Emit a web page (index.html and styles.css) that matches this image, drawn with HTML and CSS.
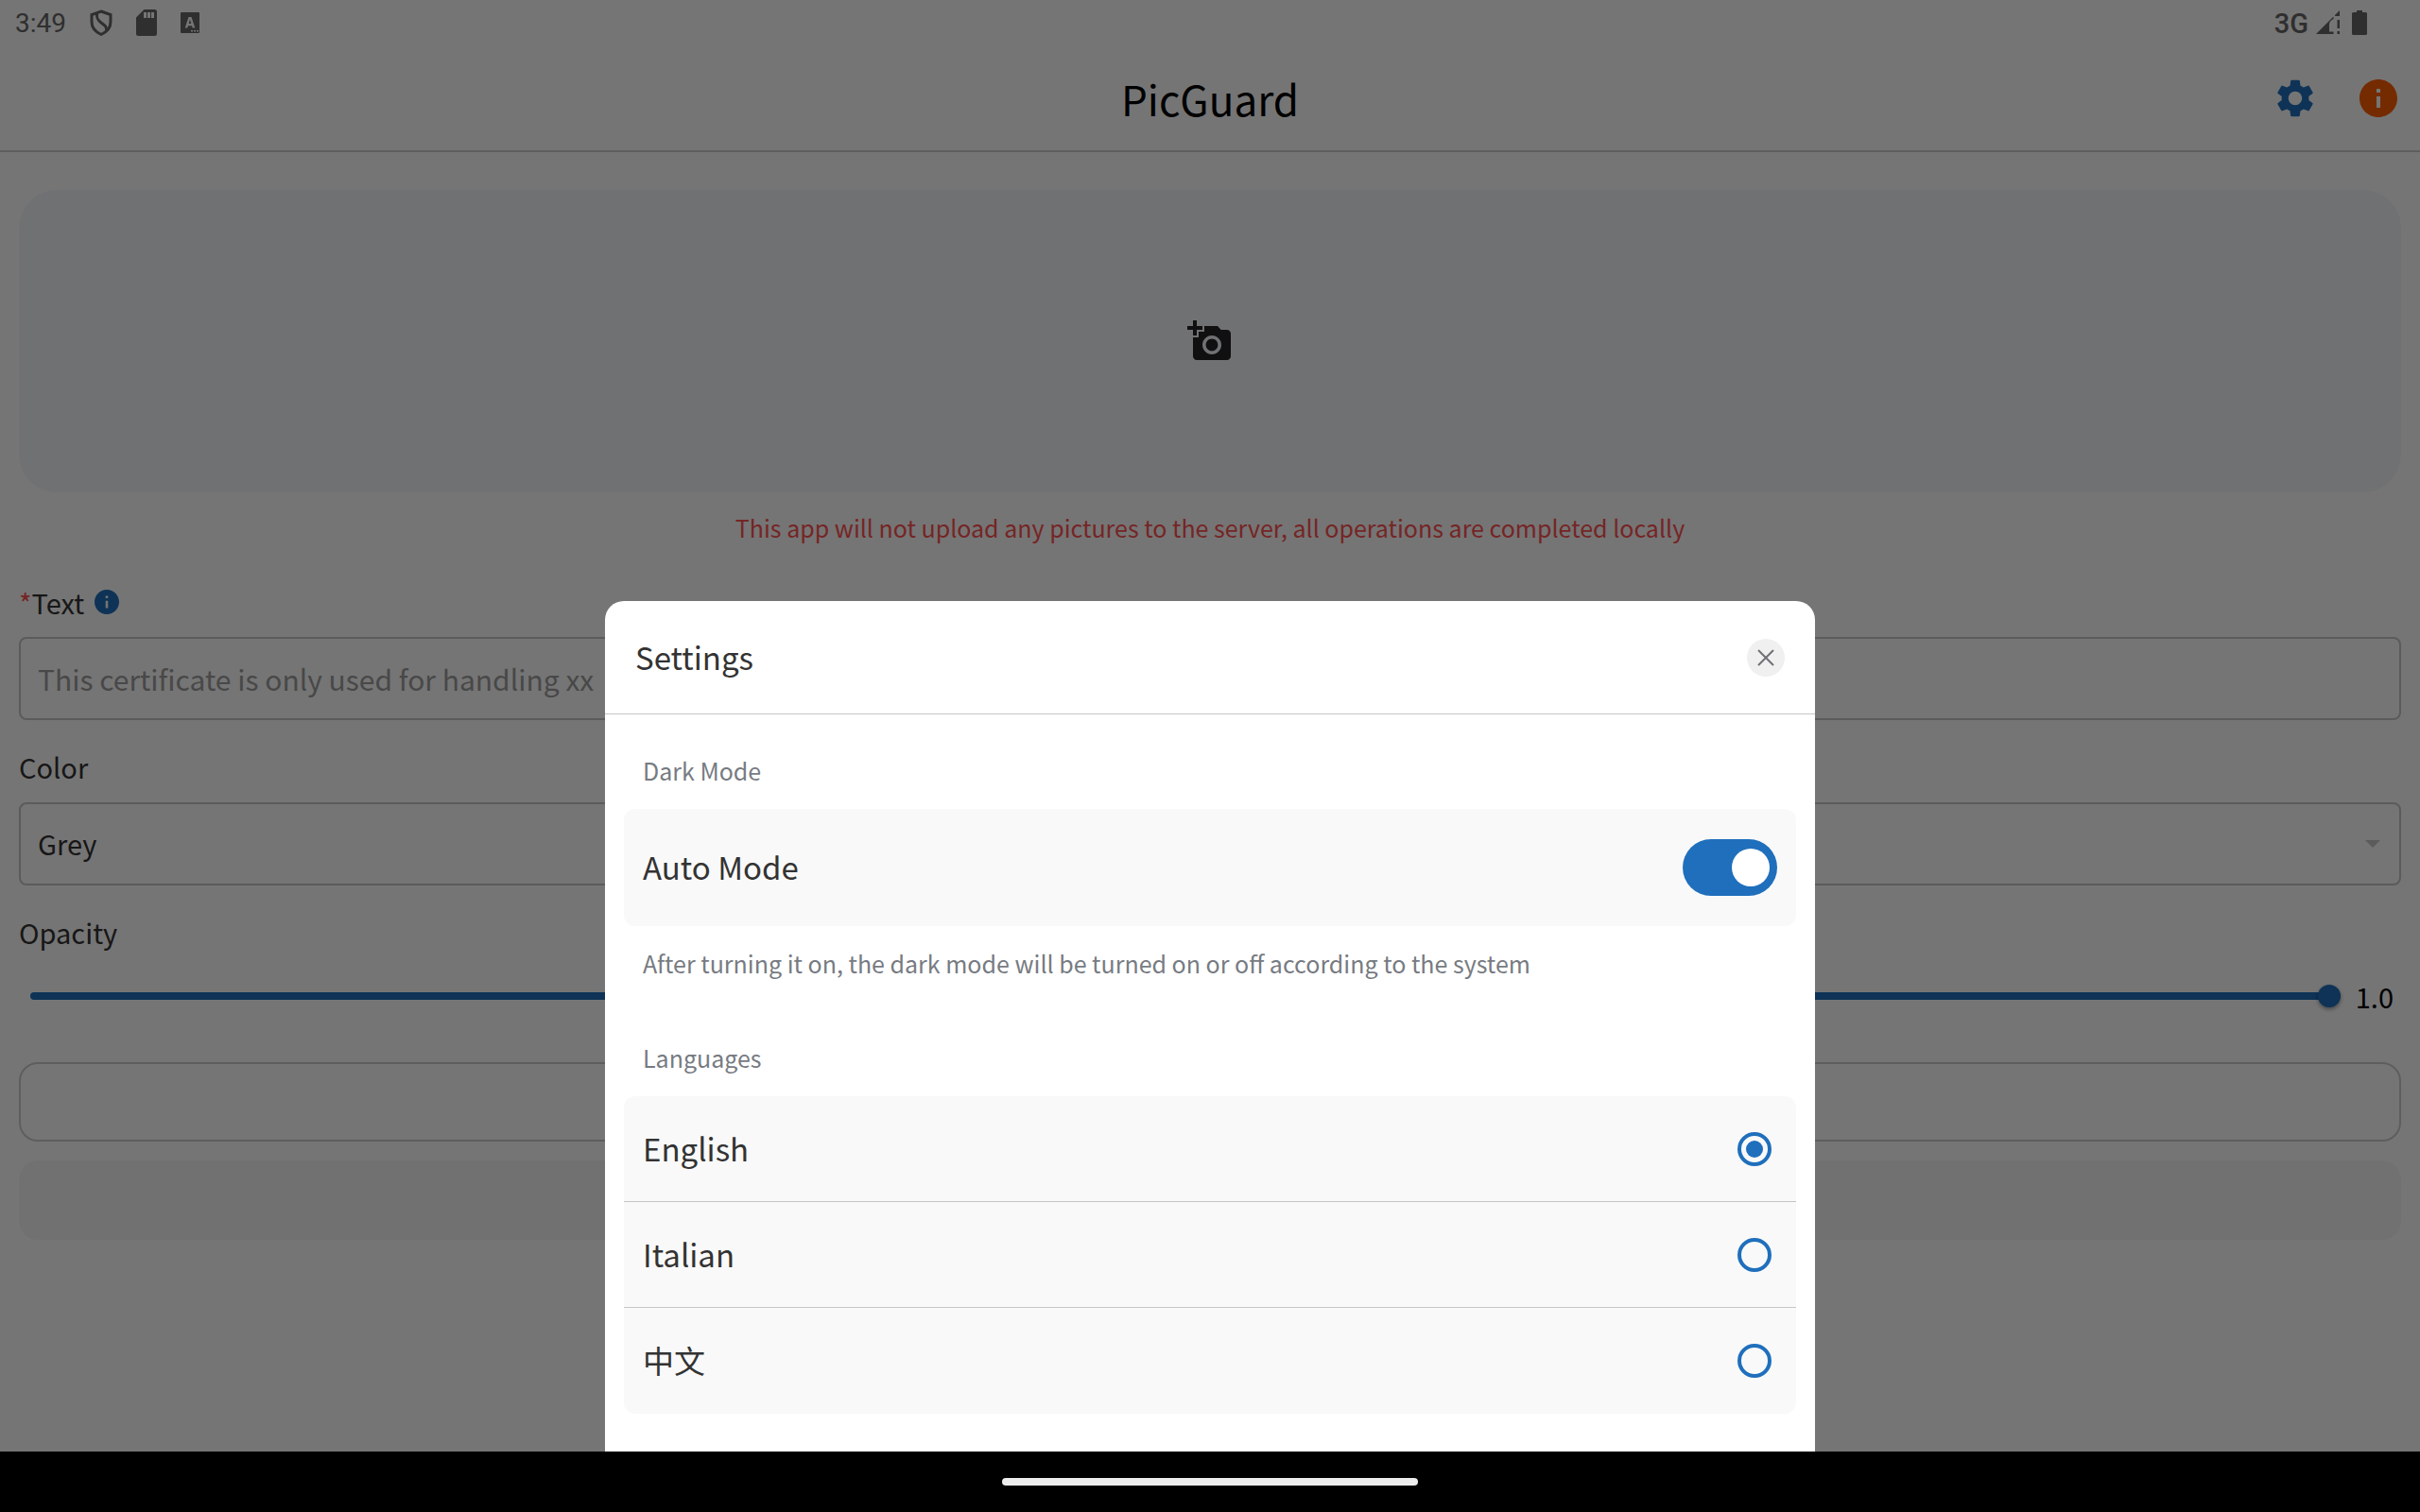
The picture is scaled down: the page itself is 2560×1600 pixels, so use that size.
FILE: index.html
```html
<!DOCTYPE html>
<html lang="en">
<head>
<meta charset="utf-8">
<meta name="viewport" content="width=device-width, initial-scale=1">
<title>PicGuard</title>
<link rel="stylesheet" href="styles.css">
</head>
<body>
<div class="screen">
  <div class="status">
    <div class="status-group status-left">
      <span class="clock">3:49</span>
      <svg class="shield" viewBox="0 0 24 28" aria-hidden="true"><path d="M12 2 22 5.500V13c0 6-3.500 10.500-10 13.500C5.500 23.500 2 19 2 13V5.500Z"/><path d="M7.500 4.500c-.5 5 1 7 4.500 9.500s6 4 5.500 8"/></svg>
      <svg class="sd" viewBox="0 0 22 28" aria-hidden="true"><path fill-rule="evenodd" d="M8.500 0H19.500Q22 0 22 2.500V25.500Q22 28 19.500 28H2.500Q0 28 0 25.500V8.500ZM8 3V9H11V3ZM12 3V9H15V3ZM16 3V9H19V3Z"/></svg>
      <svg class="abox" viewBox="0 0 20 22" aria-hidden="true"><path fill-rule="evenodd" d="M1 0H19Q20 0 20 1V21Q20 22 19 22H1Q0 22 0 21V1Q0 0 1 0ZM8.500 5 4.700 16.500H7.300L8 14.200H12L12.700 16.500H15.300L11.500 5ZM10 7.800 11.300 12H8.700ZM11 19V20.500H13V19ZM14 19V20.500H16V19ZM17 19V20.500H19V19Z"/></svg>
    </div>
    <div class="status-group status-right">
      <span class="net">3G</span>
      <svg class="signal" viewBox="0 0 26 26" aria-hidden="true"><path d="M0 25 18.500 6.500V9Q14 11 14 15V22.500H18.500V25ZM20 5 25 0V6H20ZM22.500 10H25V19H22.500ZM22.500 22H25V25H22.500Z"/></svg>
      <svg class="battery" viewBox="0 0 16 26" aria-hidden="true"><path d="M5 0H11V2H14.500Q16 2 16 3.500V24.500Q16 26 14.500 26H1.500Q0 26 0 24.500V3.500Q0 2 1.500 2H5Z"/></svg>
    </div>
  </div>
  <header class="appbar">
    <h1>PicGuard</h1>
    <div class="actions">
      <button class="icon-btn gear" type="button" aria-label="Settings"><svg viewBox="0 0 24 24"><path d="M19.140 12.940c.04-.3.060-.61.060-.94 0-.32-.02-.64-.07-.94l2.030-1.580c.18-.14.230-.41.120-.61l-1.920-3.320c-.12-.22-.37-.29-.59-.22l-2.390.96c-.5-.38-1.030-.7-1.620-.94l-.36-2.540c-.04-.24-.24-.41-.48-.41h-3.840c-.24 0-.43.170-.47.410l-.36 2.540c-.59.240-1.130.570-1.620.940l-2.390-.96c-.22-.08-.47 0-.59.220L2.740 8.870c-.12.210-.08.470.120.610l2.030 1.580c-.05.300-.09.630-.09.940s.02.640.070.940l-2.030 1.580c-.18.140-.23.410-.12.610l1.920 3.320c.12.220.370.290.590.220l2.390-.96c.5.380 1.030.700 1.620.940l.36 2.540c.05.240.240.410.480.410h3.840c.24 0 .44-.17.470-.41l.36-2.540c.59-.24 1.130-.56 1.620-.94l2.390.96c.22.080.470 0 .59-.22l1.920-3.320c.12-.22.070-.47-.12-.61l-2.010-1.580zM12 15.600c-1.980 0-3.600-1.620-3.600-3.600s1.620-3.600 3.600-3.600 3.600 1.620 3.600 3.600-1.620 3.600-3.600 3.600z"/></svg></button>
      <button class="icon-btn about" type="button" aria-label="About"><svg viewBox="0 0 24 24"><path d="M12 2C6.480 2 2 6.480 2 12s4.480 10 10 10 10-4.480 10-10S17.520 2 12 2zm1 15h-2v-6h2v6zm0-8h-2V7h2v2z"/></svg></button>
    </div>
  </header>
  <main class="form">
    <button class="picker" type="button" aria-label="Add picture"><svg viewBox="0 0 24 24"><path d="M3 4V1h2v3h3v2H5v3H3V6H0V4h3zm3 6V7h3V4h7l1.830 2H21c1.100 0 2 .9 2 2v12c0 1.100-.9 2-2 2H5c-1.100 0-2-.9-2-2V10h3zm7 9c2.760 0 5-2.240 5-5s-2.240-5-5-5-5 2.240-5 5 2.240 5 5 5zm-3.200-5c0 1.770 1.430 3.200 3.200 3.200s3.200-1.430 3.200-3.200-1.430-3.200-3.200-3.200-3.200 1.430-3.200 3.200z"/></svg></button>
    <p class="notice">This app will not upload any pictures to the server, all operations are completed locally</p>
    <div class="label-row">
      <label for="text"><span class="req">*</span>Text</label>
      <svg class="hint" viewBox="2 2 20 20" aria-hidden="true"><path d="M12 2C6.480 2 2 6.480 2 12s4.480 10 10 10 10-4.480 10-10S17.520 2 12 2zm1 15h-2v-6h2v6zm0-8h-2V7h2v2z"/></svg>
    </div>
    <input class="field" id="text" type="text" placeholder="This certificate is only used for handling xx">
    <div class="label-row spaced"><label for="color">Color</label></div>
    <div class="select-wrap">
      <select class="field" id="color"><option>Grey</option></select>
      <svg class="arrow" viewBox="0 0 16 8" aria-hidden="true"><path d="M0 0H16L8 8Z"/></svg>
    </div>
    <div class="label-row spaced"><label for="opacity">Opacity</label></div>
    <div class="slider-row">
      <input id="opacity" type="range" min="0" max="1" step="0.1" value="1">
      <output for="opacity">1.0</output>
    </div>
    <button class="wide outlined" type="button" aria-label="Preview"></button>
    <button class="wide filled" type="button" aria-label="Save" disabled></button>
  </main>
  <div class="scrim">
    <section class="sheet" role="dialog" aria-labelledby="sheet-title">
      <header class="sheet-head">
        <h2 id="sheet-title">Settings</h2>
        <button class="close" type="button" aria-label="Close"><svg viewBox="0 0 18 18"><path d="M1 1 17 17M17 1 1 17"/></svg></button>
      </header>
      <div class="sheet-body">
        <h3>Dark Mode</h3>
        <label class="card toggle"><span>Auto Mode</span><input class="switch" type="checkbox" role="switch" checked></label>
        <p class="note">After turning it on, the dark mode will be turned on or off according to the system</p>
        <h3 id="lang-title">Languages</h3>
        <div class="card languages" role="radiogroup" aria-labelledby="lang-title">
          <label class="option"><span>English</span><input type="radio" name="lang" checked></label>
          <label class="option"><span>Italian</span><input type="radio" name="lang"></label>
          <label class="option"><span lang="zh-CN">中文</span><input type="radio" name="lang"></label>
        </div>
      </div>
    </section>
  </div>
</div>
<div class="navbar"><div class="handle"></div></div>
</body>
</html>
```
FILE: styles.css
```css
:root {
  --blue: #1f6fbc;
  --line: #c6c6c6;
  --ink: #333;
  --red: #ff5252;
}
* { box-sizing: border-box; }
body {
  margin: 0;
  min-height: 100vh;
  display: flex;
  flex-direction: column;
  background: #fff;
  color: var(--ink);
  font-family: "Noto Sans CJK SC", "Noto Sans", sans-serif;
  font-size: 29px;
  line-height: 40px;
}
h1, h2, h3, p { margin: 0; font-weight: 400; }
button, input, select { font: inherit; color: inherit; margin: 0; }
button { padding: 0; border: 0; background: none; }
svg { display: block; fill: currentColor; }

.screen { position: relative; flex: 1; }

.status {
  height: 48px;
  display: flex;
  justify-content: space-between;
  padding: 0 56px 0 16px;
  color: #666;
  font: 28px/48px Roboto, sans-serif;
}
.status-group { display: flex; align-items: center; }
.status-left { gap: 25px; }
.status-right { gap: 12px; }
.clock, .net { padding-top: 2px; }
.shield { width: 24px; height: 28px; fill: none; stroke: currentColor; stroke-width: 3; }
.sd { width: 22px; height: 28px; }
.abox { width: 20px; height: 22px; }
.net { font-size: 29px; font-weight: 500; }
.signal { width: 26px; height: 26px; }
.battery { width: 16px; height: 26px; }
.status-right .net { margin-right: -4px; }

.appbar {
  height: 113px;
  display: grid;
  grid-template-columns: 1fr auto 1fr;
  align-items: center;
  border-bottom: 2px solid #cdcdcd;
}
.appbar h1 { grid-column: 2; font-size: 44px; line-height: 64px; color: #000; }
.actions { display: flex; justify-content: flex-end; gap: 40px; padding-right: 20px; }
.icon-btn { width: 48px; height: 48px; }
.gear { color: var(--blue); }
.about { color: #fd5f00; }

.form { display: flex; flex-direction: column; padding: 40px 20px; }
.picker {
  height: 320px;
  display: grid;
  place-items: center;
  border-radius: 40px;
  background: #f4f7fb;
  color: #232323;
}
.picker svg { width: 48px; height: 48px; }
.notice { padding: 17px 0 23px; text-align: center; font-size: 25px; color: var(--red); }
.label-row { display: flex; align-items: center; gap: 11px; height: 73px; padding-bottom: 2px; }
.label-row.spaced { height: 87px; padding: 10px 0 0; }
.req { color: var(--red); }
.hint { width: 26px; height: 26px; color: var(--blue); }
.field {
  width: 100%;
  height: 88px;
  padding: 0 18px;
  border: 2px solid var(--line);
  border-radius: 8px;
  background: transparent;
}
input.field { font-size: 30px; }
.field::placeholder { color: #9e9e9e; opacity: 1; }
.select-wrap { display: grid; align-items: center; }
.select-wrap > * { grid-area: 1 / 1; }
.select-wrap select { appearance: none; padding-bottom: 2px; }
.arrow { width: 16px; height: 8px; margin-right: 22px; justify-self: end; color: var(--line); }

.slider-row { display: flex; align-items: center; gap: 16px; height: 60px; padding: 0 8px 0 12px; color: #000; }
.slider-row input {
  flex: 1;
  appearance: none;
  height: 8px;
  border-radius: 4px;
  background: var(--blue);
}
.slider-row input::-webkit-slider-thumb {
  appearance: none;
  width: 24px;
  height: 24px;
  border-radius: 50%;
  background: var(--blue);
  box-shadow: 0 2px 4px rgba(0, 0, 0, 0.4);
}
.wide { height: 84px; border-radius: 20px; }
.outlined { margin-top: 40px; border: 2px solid #cdcdcd; }
.filled { margin-top: 20px; background: #f7f7f7; }

.scrim {
  position: absolute;
  inset: 0;
  display: flex;
  align-items: flex-end;
  justify-content: center;
  background: rgba(0, 0, 0, 0.54);
}
.sheet { width: 50%; border-radius: 20px 20px 0 0; background: #fff; }
.sheet-head {
  display: flex;
  align-items: center;
  justify-content: space-between;
  height: 120px;
  padding: 0 32px;
  border-bottom: 1px solid var(--line);
}
.sheet-head h2, .card { font-size: 33px; line-height: 48px; }
.close {
  width: 40px;
  height: 40px;
  display: grid;
  place-items: center;
  border-radius: 50%;
  background: #f0f0f0;
  color: #6f7177;
}
.close svg { width: 18px; height: 18px; fill: none; stroke: currentColor; stroke-width: 2; }
.sheet-body { padding: 0 20px 40px; }
.sheet-body h3, .note { padding: 0 20px; font-size: 25px; color: #777b82; }
.sheet-body h3 { padding-top: 39px; padding-bottom: 21px; }
.note { padding-top: 19px; padding-bottom: 21px; }
.card { border-radius: 12px; background: #f9f9f9; overflow: hidden; }
.card span, .sheet-head h2 { padding-bottom: 2px; }
.toggle, .option { display: flex; align-items: center; justify-content: space-between; padding: 0 20px; }
.toggle { height: 124px; }
.switch {
  appearance: none;
  width: 100px;
  height: 60px;
  padding: 10px 8px;
  display: flex;
  justify-content: flex-end;
  border-radius: 30px;
  background: var(--blue);
}
.switch::before { content: ""; width: 40px; height: 40px; border-radius: 50%; background: #fff; }
.option { height: 112px; padding-right: 26px; border-bottom: 1px solid var(--line); }
.option:last-child { border-bottom: 0; }
.option input {
  appearance: none;
  width: 36px;
  height: 36px;
  display: grid;
  place-items: center;
  border: 4px solid var(--blue);
  border-radius: 50%;
}
.option input:checked::before { content: ""; width: 18px; height: 18px; border-radius: 50%; background: var(--blue); }

.navbar { height: 64px; display: grid; place-items: center; background: #000; }
.handle { width: 440px; height: 8px; border-radius: 4px; background: #ececec; }
```
